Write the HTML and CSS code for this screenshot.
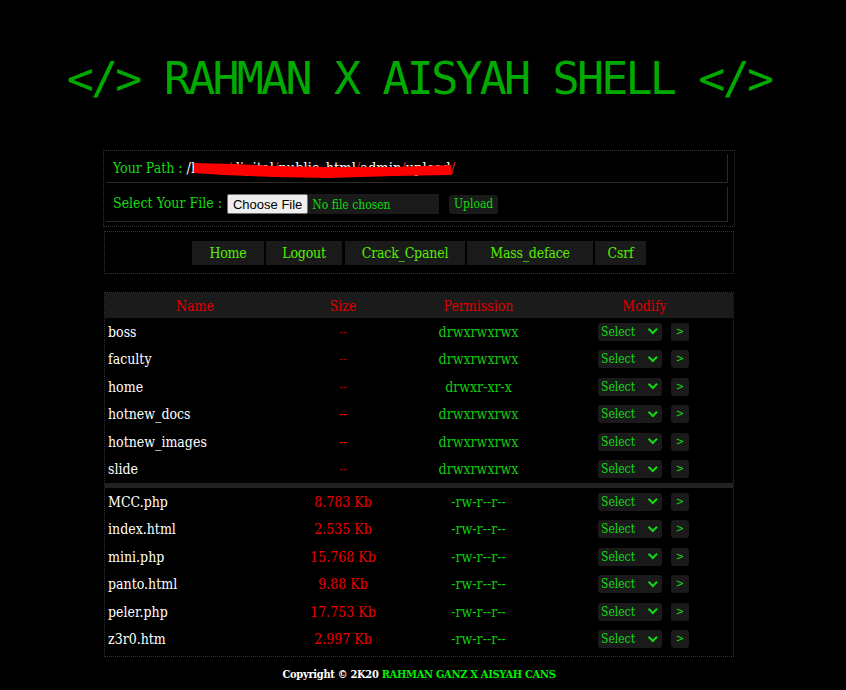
FILE: index.html
```html
<!DOCTYPE html>
<html>
<head>
<meta charset="utf-8">
<link rel="stylesheet" href="styles.css">
</head>
<body>
<h1 class="title">&lt;/&gt; RAHMAN X AISYAH SHELL &lt;/&gt;</h1>

<div class="box info">
  <table class="info-table">
    <tr><td class="path-cell"><span class="lbl">Your Path : </span><span class="path"><a>/</a><a class="seg">home</a><span class="sl">/</span><a class="seg">digital</a><span class="sl">/</span><a class="seg">public_html</a><span class="sl">/</span><a class="seg">admin</a><span class="sl">/</span><a class="seg">upload</a><span class="sl">/</span><svg class="scribble" width="258" height="16" viewBox="0 0 258 16"><path d="M0 0 L40 1 L80 3 L135 4 L200 4 L257 2 L258 12 L200 13 L135 15 L80 14 L30 12 L0 10 Z" fill="#f00"/></svg></span>
    </td></tr>
    <tr><td class="file-cell"><span class="lbl">Select Your File : </span><input type="file" class="file"><button class="upload">Upload</button></td></tr>
  </table>
</div>

<div class="box nav">
  <a class="nav-btn b-home">Home</a><a class="nav-btn b-logout">Logout</a><a class="nav-btn b-crack">Crack_Cpanel</a><a class="nav-btn b-mass">Mass_deface</a><a class="nav-btn b-csrf">Csrf</a>
</div>

<div class="box list">
  <table class="files">
    <thead>
      <tr><th class="c-name">Name</th><th class="c-size">Size</th><th class="c-perm">Permission</th><th class="c-mod">Modify</th></tr>
    </thead>
    <tbody>
      <tr><td class="name">boss</td><td class="size dim">--</td><td class="perm">drwxrwxrwx</td><td class="mod"><span class="sel">Select<i></i></span><span class="go">&gt;</span></td></tr>
      <tr><td class="name">faculty</td><td class="size dim">--</td><td class="perm">drwxrwxrwx</td><td class="mod"><span class="sel">Select<i></i></span><span class="go">&gt;</span></td></tr>
      <tr><td class="name">home</td><td class="size dim">--</td><td class="perm">drwxr-xr-x</td><td class="mod"><span class="sel">Select<i></i></span><span class="go">&gt;</span></td></tr>
      <tr><td class="name">hotnew_docs</td><td class="size">--</td><td class="perm">drwxrwxrwx</td><td class="mod"><span class="sel">Select<i></i></span><span class="go">&gt;</span></td></tr>
      <tr><td class="name">hotnew_images</td><td class="size">--</td><td class="perm">drwxrwxrwx</td><td class="mod"><span class="sel">Select<i></i></span><span class="go">&gt;</span></td></tr>
      <tr><td class="name">slide</td><td class="size dim">--</td><td class="perm">drwxrwxrwx</td><td class="mod"><span class="sel">Select<i></i></span><span class="go">&gt;</span></td></tr>
      <tr class="sep"><td colspan="4"></td></tr>
      <tr><td class="name">MCC.php</td><td class="size">8.783 Kb</td><td class="perm">-rw-r--r--</td><td class="mod"><span class="sel">Select<i></i></span><span class="go">&gt;</span></td></tr>
      <tr><td class="name">index.html</td><td class="size">2.535 Kb</td><td class="perm">-rw-r--r--</td><td class="mod"><span class="sel">Select<i></i></span><span class="go">&gt;</span></td></tr>
      <tr><td class="name">mini.php</td><td class="size">15.768 Kb</td><td class="perm">-rw-r--r--</td><td class="mod"><span class="sel">Select<i></i></span><span class="go">&gt;</span></td></tr>
      <tr><td class="name">panto.html</td><td class="size">9.88 Kb</td><td class="perm">-rw-r--r--</td><td class="mod"><span class="sel">Select<i></i></span><span class="go">&gt;</span></td></tr>
      <tr><td class="name">peler.php</td><td class="size">17.753 Kb</td><td class="perm">-rw-r--r--</td><td class="mod"><span class="sel">Select<i></i></span><span class="go">&gt;</span></td></tr>
      <tr><td class="name">z3r0.htm</td><td class="size">2.997 Kb</td><td class="perm">-rw-r--r--</td><td class="mod"><span class="sel">Select<i></i></span><span class="go">&gt;</span></td></tr>
    </tbody>
  </table>
</div>

<footer class="foot"><span class="copy">Copyright © 2K20 </span><span class="brand">RAHMAN GANZ X AISYAH CANS</span></footer>
</body>
</html>
```
FILE: styles.css
```css
html, body {
  margin: 0;
  padding: 0;
  background: #000;
}
body {
  font-family: "DejaVu Serif Condensed", "DejaVu Serif", serif;
  font-size: 13px;
  color: #fff;
  padding: 53px 8px 0 0;
}
.title {
  margin: 0 0 45px;
  text-align: center;
  font-family: "DejaVu Sans Mono", monospace;
  font-weight: normal;
  font-size: 45px;
  letter-spacing: -2.8px;
  line-height: 52px;
  color: #0a0;
}
.box {
  width: 628px;
  margin: 0 auto;
  border: 1px dotted #333;
}
.info {
  padding: 3px 0 0 2px;
  margin-bottom: 4px;
}
.info-table {
  width: 622px;
  border-collapse: separate;
  border-spacing: 0 4px;
  margin-top: -4px;
}
.info-table td {
  border-right: 1px solid #2a2a2a;
  border-bottom: 1px solid #2a2a2a;
  padding: 0 0 0 7px;
}
.path-cell { height: 28px; }
.file-cell { height: 34px; }
.lbl {
  color: #1d1;
  font-size: 14px;
}
.path {
  position: relative;
  font-size: 14.5px;
}
.path a { color: #fff; }
.path .sl { color: #e22; }
.scribble {
  position: absolute;
  left: 7px;
  top: 3px;
}
.file {
  width: 212px;
  height: 20px;
  background: #1a1a1a;
  color: #1d1;
  font-family: "DejaVu Serif Condensed", serif;
  font-size: 12px;
  vertical-align: middle;
  margin-left: 1px;
}
.file::file-selector-button {
  font-family: "Liberation Sans", Arial, sans-serif;
  font-size: 13px;
  background: #efefef;
  color: #000;
  border: 1px solid #767676;
  border-radius: 2px;
  height: 20px;
  padding: 0 5px;
  margin-right: 4px;
}
.upload {
  margin-left: 10px;
  background: #1a1a1a;
  color: #1d1;
  border: none;
  border-radius: 3px;
  height: 19px;
  padding: 0 5px;
  font-family: "DejaVu Serif Condensed", serif;
  font-size: 12px;
  vertical-align: middle;
}
.nav {
  display: flex;
  justify-content: center;
  gap: 2px;
  padding: 9px 0 8px;
  margin-bottom: 18px;
}
.nav-btn {
  background: #1a1a1a;
  color: #5e0;
  font-size: 14px;
  height: 24px;
  line-height: 24px;
  text-align: center;
  letter-spacing: -0.2px;
}
.b-home { width: 72px; }
.b-logout { width: 76px; margin-right: 1px; }
.b-crack { width: 120px; }
.b-mass { width: 126px; }
.b-csrf { width: 51px; }
.list {
  padding: 0 0 3px;
}
.files {
  width: 100%;
  border-collapse: collapse;
}
.files th {
  background: #1b1b1b;
  color: #d00;
  font-weight: normal;
  font-size: 14px;
  height: 25px;
  padding: 0;
}
.c-name { width: 180px; }
.c-size { width: 116px; }
.c-perm { width: 155px; }
.files td {
  height: 27.5px;
  padding: 0;
  font-size: 14px;
}
.files td.name {
  padding-left: 3px;
  color: #fff;
}
.files td.size {
  text-align: center;
  color: #e00;
}
.files td.size.dim { color: #900; }
.files td.perm {
  text-align: center;
  color: #1c1;
}
.files td.mod {
  padding-left: 42px;
}
.sel {
  display: inline-flex;
  align-items: center;
  justify-content: space-between;
  width: 64px;
  height: 18px;
  box-sizing: border-box;
  padding: 0 3px;
  background: #1a1a1a;
  border-radius: 3px;
  color: #1d1;
  font-size: 12px;
  vertical-align: middle;
}
.sel i {
  width: 5px;
  height: 5px;
  border-right: 2px solid #1d1;
  border-bottom: 2px solid #1d1;
  transform: rotate(45deg) translate(-2px, -1px);
  margin-right: 2px;
}
.go {
  display: inline-block;
  width: 18px;
  height: 18px;
  line-height: 18px;
  text-align: center;
  margin-left: 9px;
  background: #1a1a1a;
  border-radius: 3px;
  color: #1d1;
  font-size: 11px;
  vertical-align: middle;
}
.files tr.sep td {
  height: 5px;
  background: #222;
  padding: 0;
}
.foot {
  text-align: center;
  margin-top: 11px;
  font-weight: bold;
  font-size: 11px;
  letter-spacing: -0.3px;
}
.copy { color: #fff; }
.brand { color: #0e0; }
```
